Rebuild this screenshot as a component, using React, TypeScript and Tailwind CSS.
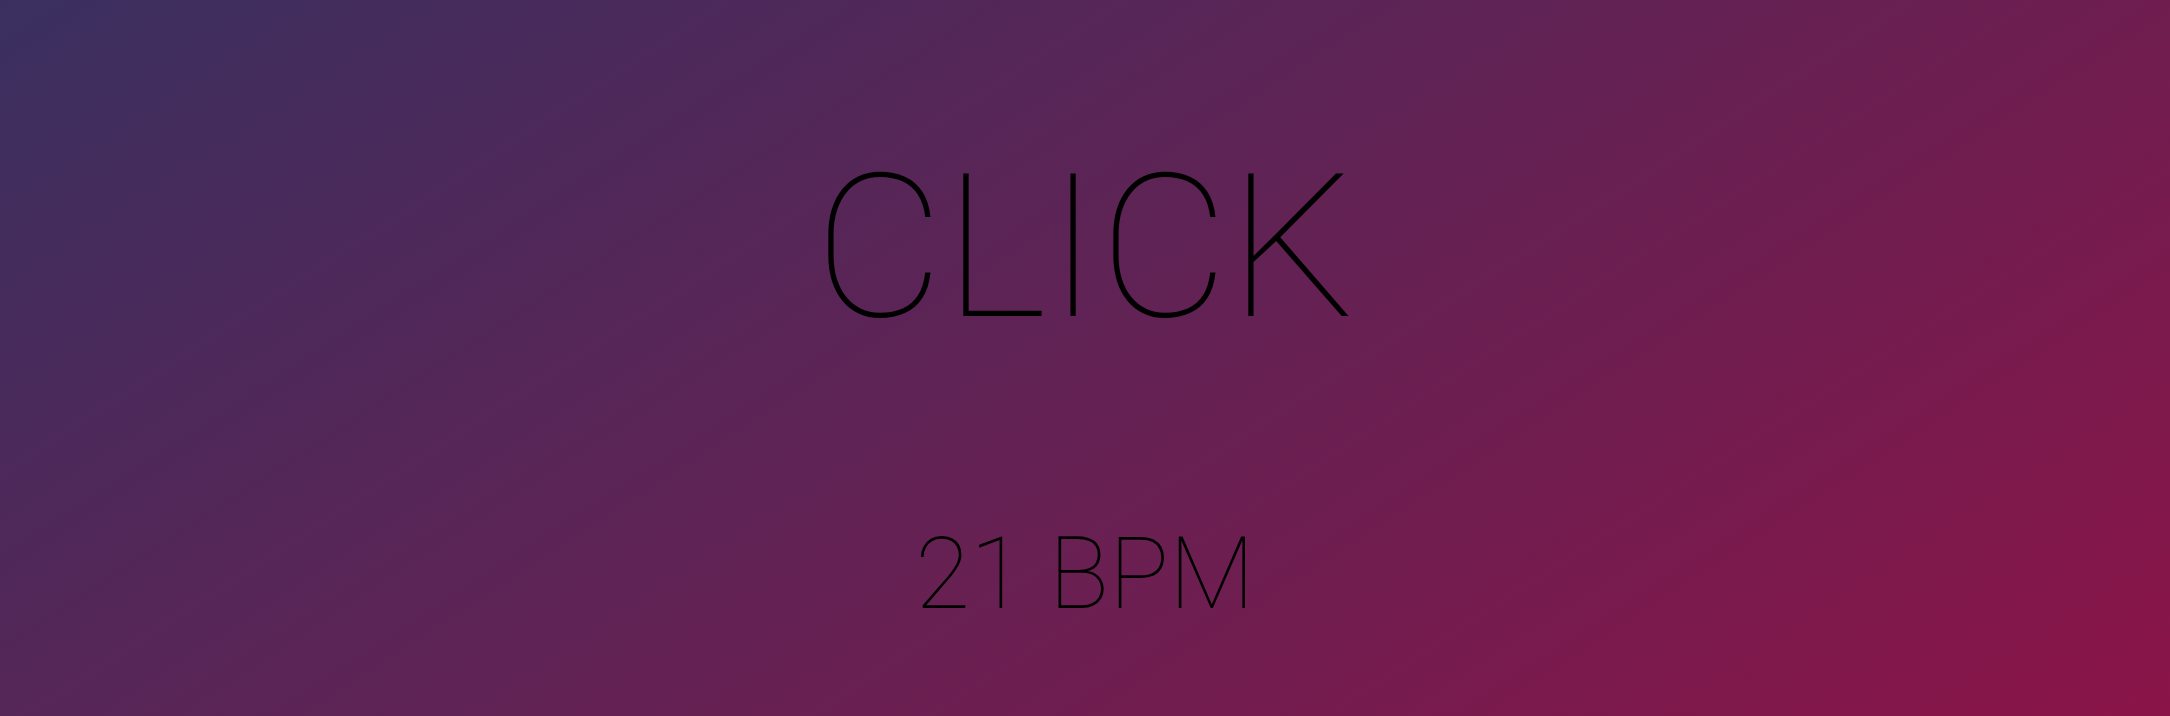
export default function App() {
  return (
    <div
      className="w-full h-[716px] flex flex-col items-center text-black bg-[linear-gradient(147deg,#3a3060_0%,#8a1448_100%)]"
      style={{ fontFamily: 'Roboto, "Liberation Sans", sans-serif' }}
    >
      <div className="pt-[148px] text-[200px] leading-none font-thin">CLICK</div>
      <div className="mt-[176px] text-[100px] leading-none font-thin">21 BPM</div>
    </div>
  );
}
